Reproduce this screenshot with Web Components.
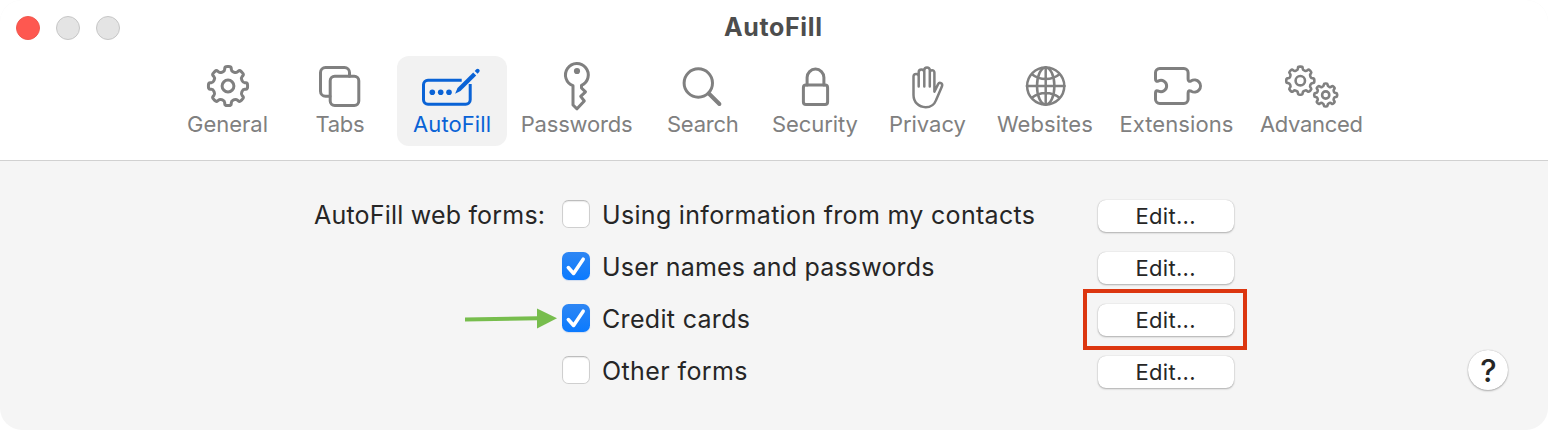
<!DOCTYPE html>
<html lang="en">
<head>
<meta charset="utf-8">
<title>AutoFill</title>
<style>
body {
    margin: 0;
    background: #fff;
    font-family: Inter, "Liberation Sans", sans-serif;
}
</style>
</head>
<body>
<settings-window>
    <window-bar slot="head"><fit-label width="98">AutoFill</fit-label></window-bar>
    <tool-bar slot="head">
        <tool-item icon="general" size="111"><fit-label width="81">General</fit-label></tool-item>
        <tool-item icon="tabs" size="110"><fit-label width="49">Tabs</fit-label></tool-item>
        <tool-item icon="autofill" size="110" active><fit-label width="78">AutoFill</fit-label></tool-item>
        <tool-item icon="passwords" size="135.4"><fit-label width="112">Passwords</fit-label></tool-item>
        <tool-item icon="search" size="113"><fit-label width="72">Search</fit-label></tool-item>
        <tool-item icon="security" size="107"><fit-label width="86">Security</fit-label></tool-item>
        <tool-item icon="privacy" size="114"><fit-label width="77">Privacy</fit-label></tool-item>
        <tool-item icon="websites" size="117"><fit-label width="96">Websites</fit-label></tool-item>
        <tool-item icon="extensions" size="142"><fit-label width="114">Extensions</fit-label></tool-item>
        <tool-item icon="advanced" size="124"><fit-label width="103">Advanced</fit-label></tool-item>
    </tool-bar>
    <form-row>
        <fit-label slot="title" width="231">AutoFill web forms:</fit-label>
        <check-box></check-box>
        <fit-label slot="text" width="433">Using information from my contacts</fit-label>
    </form-row>
    <form-row>
        <check-box checked></check-box>
        <fit-label slot="text" width="332.5">User names and passwords</fit-label>
    </form-row>
    <form-row marked>
        <check-box checked></check-box>
        <fit-label slot="text" width="148">Credit cards</fit-label>
    </form-row>
    <form-row>
        <check-box></check-box>
        <fit-label slot="text" width="145.5">Other forms</fit-label>
    </form-row>
    <help-button slot="help">?</help-button>
</settings-window>

<script>
// closed outline of a gear, corners softened by quadratic curves
function gearPath(cx, cy, outer, root, teeth) {
    const step = Math.PI * 2 / teeth;
    const points = [];
    for (let i = 0; i < teeth; i++) {
        const a = i * step - Math.PI / 2;
        [[-0.29, root], [-0.2, outer], [0.2, outer], [0.29, root]].forEach(([k, r]) => {
            points.push([cx + Math.cos(a + k * step) * r, cy + Math.sin(a + k * step) * r]);
        });
    }
    const along = (p, q, t) => [p[0] + (q[0] - p[0]) * t, p[1] + (q[1] - p[1]) * t].map((n) => n.toFixed(2)).join(" ");
    let d = "";
    points.forEach((p, i) => {
        const prev = points[(i + points.length - 1) % points.length];
        const next = points[(i + 1) % points.length];
        d += `${i ? "L" : "M"}${along(p, prev, 0.38)}Q${p[0].toFixed(2)} ${p[1].toFixed(2)} ${along(p, next, 0.38)}`;
    });
    return d + "Z";
}

const icons = {
    general: `<path d="${gearPath(30, 24, 19.8, 15.3, 8)}"/><circle cx="30" cy="24" r="5.9"/>`,
    tabs: `<rect x="20.2" y="14.2" width="28.6" height="29.3" rx="4.5"/>
        <path d="M20 34.2h-4.5a5 5 0 0 1-5-5V10.5a5 5 0 0 1 5-5h19a5 5 0 0 1 5 5v3.7"/>`,
    autofill: `<path d="M39.7 18.2H6a4.5 4.5 0 0 0-4.5 4.5v15a4.5 4.5 0 0 0 4.5 4.5h37.7a4.5 4.5 0 0 0 4.5-4.5V22" stroke-linecap="butt"/>
        <g fill="currentColor" stroke="none">
            <circle cx="10.3" cy="30.3" r="2.8"/><circle cx="18.7" cy="30.3" r="2.8"/><circle cx="27" cy="30.3" r="2.8"/>
            <path d="M33.1 31.8l2.4-5.9L51.2 10.4l3 3-15.7 15.6z"/>
            <path d="M52.7 8.9l1.6-1.6q1.4-1.2 2.7 0 1.4 1.4.2 2.8l-1.6 1.6z"/>
        </g>`,
    passwords: `<path d="M26 23.7A11.4 11.4 0 1 1 34.5 23.4V26l4 3.8-4.8 4.6 3.6 4.6L30 46.8l-4-3.8z"/>
        <circle cx="30" cy="9" r="3.1" fill="currentColor" stroke="none"/>`,
    search: `<circle cx="25.3" cy="21" r="14.2"/><path d="M35.8 31.5L46.4 42" stroke-width="4"/>`,
    security: `<rect x="18.4" y="23.1" width="24.2" height="19.5" rx="2.6"/>
        <path d="M22.1 23v-7.4a8.4 8.5 0 0 1 16.8 0V23"/>`,
    privacy: `<path stroke-width="2.5" d="M21.7 24.6V14.6a2.6 2.6 0 0 0-5.2 0V33c0 7 5 12.2 12.2 12.2 5.6 0 8.7-2.8 10.4-7.1l5.8-13.5c1.3-3.6-2.5-5-3.9-2.3l-3.6 7.3V10.6a2.3 2.3 0 0 0-4.6 0v14M32.8 24.6V8.2a2.7 2.7 0 0 0-5.5 0v16.4M27.3 24.6V10.3a2.8 2.8 0 0 0-5.6 0v14.3"/>`,
    websites: `<g stroke-width="2.5"><circle cx="30.7" cy="24" r="18.6"/><ellipse cx="30.7" cy="24" rx="8.7" ry="18.6"/>
        <path d="M30.7 5.2v37.6M11.9 24h37.6M16.9 12.2Q23 17 30.7 17t13.8-4.8M16.9 35.8Q23 31 30.7 31t13.8 4.8"/></g>`,
    extensions: `<path d="M9.5 17V10.7a4.2 4.2 0 0 1 4.2-4.2h24.2a4.2 4.2 0 0 1 4.2 4.2V17c0 2.5 1.2 2.8 3.1 1.8a6.1 6.1 0 1 1 0 10.4c-1.9-1-3.1-.7-3.1 1.8v6.3a4.2 4.2 0 0 1-4.2 4.2H13.7a4.2 4.2 0 0 1-4.2-4.2V31c0-2.5 1.2-2.8 3.1-1.8a5.7 5.7 0 1 0 0-10.4c-1.9 1-3.1.7-3.1-1.8z"/>`,
    advanced: `<g stroke-width="2.6"><path d="${gearPath(19.3, 18.7, 14.2, 11.1, 8)}"/><circle cx="19.3" cy="18.7" r="4.7"/>
        <path d="${gearPath(44.7, 33, 11.6, 9, 8)}"/><circle cx="44.7" cy="33" r="3.6"/></g>`
};

class BaseElement extends HTMLElement {
    constructor () {
        super();
        this.attachShadow({mode: "open"});
    }

    connectedCallback () {
        this.shadowRoot.innerHTML = this.template();
    }
}

// one line of text, tracked out or in to a given width
class FitLabel extends BaseElement {
    template () {
        return `<style>
:host {
    display: inline-block;
    width: ${this.getAttribute("width")}px;
    white-space: nowrap;
}
</style><span><slot></slot></span>`;
    }

    connectedCallback () {
        super.connectedCallback();
        requestAnimationFrame(() => this.fit());
    }

    fit () {
        const span = this.shadowRoot.querySelector("span");
        const count = this.textContent.length - 1;
        const spare = Number(this.getAttribute("width")) - span.getBoundingClientRect().width;
        span.style.letterSpacing = `${spare / count}px`;
    }
}

class SettingsWindow extends BaseElement {
    template () {
        return `<style>
:host {
    display: block;
    height: 430px;
    box-sizing: border-box;
    border-radius: 22px;
    overflow: hidden;
    background: #f5f5f5;
    position: relative;
}

header {
    height: 160px;
    background: #fff;
    border-bottom: 1px solid #d1d1d1;
}

main {
    padding-top: 28px;
}

::slotted(help-button) {
    position: absolute;
    right: 40px;
    bottom: 40px;
}
</style>
<header><slot name="head"></slot></header>
<main><slot></slot></main>
<slot name="help"></slot>`;
    }
}

class WindowBar extends BaseElement {
    template () {
        return `<style>
:host {
    display: grid;
    grid-template-columns: 1fr auto 1fr;
    height: 56px;
    align-items: center;
    color: #4d4d4d;
    font-size: 25px;
    font-weight: 700;
}

.lights {
    display: flex;
    gap: 16px;
    padding-left: 16px;
}

::slotted(fit-label) {
    margin: 0 2px 2px 0;
}

i {
    width: 24px;
    height: 24px;
    border-radius: 50%;
    box-sizing: border-box;
    background: #e4e4e4;
    border: 1px solid #c6c6c6;
}

i:first-child {
    background: #fe5850;
    border-color: #f0584e;
}
</style>
<div class="lights"><i></i><i></i><i></i></div>
<slot></slot>`;
    }
}

class ToolBar extends BaseElement {
    template () {
        return `<style>
:host {
    display: flex;
    gap: 2px;
    padding-left: 172px;
}
</style><slot></slot>`;
    }
}

class ToolItem extends BaseElement {
    template () {
        return `<style>
:host {
    display: flex;
    flex-direction: column;
    align-items: center;
    box-sizing: border-box;
    width: ${this.getAttribute("size")}px;
    height: 90px;
    padding-top: 6px;
    border-radius: 12px;
    color: #808080;
    font-size: 22px;
    line-height: 28px;
}

:host([active]) {
    background: #f2f2f2;
    color: #0a63d6;
}

svg {
    display: block;
    width: 60px;
    height: 48px;
    overflow: visible;
    fill: none;
    stroke: currentColor;
    stroke-width: 3;
    stroke-linecap: round;
    stroke-linejoin: round;
}
</style>
<svg viewBox="0 0 60 48">${icons[this.getAttribute("icon")]}</svg>
<slot></slot>`;
    }
}

class FormRow extends BaseElement {
    template () {
        const arrow = `<svg class="arrow" width="94" height="22" viewBox="0 0 94 22">
    <path d="M1 9.4L74 8.2V12.2L1 13.4z" fill="#77bd4d"/><path d="M73 .5l20 9.8L73 20.5z" fill="#77bd4d"/>
</svg>`;
        return `<style>
:host {
    display: grid;
    grid-template-columns: 545px 29px 480px 136px;
    column-gap: 14px;
    align-items: center;
    height: 52px;
    color: #262626;
    font-size: 25px;
    line-height: 32px;
    position: relative;
}

.title {
    text-align: right;
}

.check {
    padding-bottom: 2px;
    margin-left: 3px;
}

button {
    width: 136px;
    height: 32px;
    padding: 0 1px 0 0;
    margin-left: 2px;
    margin-top: 2px;
    border: none;
    border-radius: 8px;
    background: #fff;
    box-shadow: 0 0 1px rgba(0, 0, 0, 0.25), 0 1px 2px rgba(0, 0, 0, 0.28);
    color: #262626;
    font: 22px/32px Inter, "Liberation Sans", sans-serif;
}

.mark {
    position: absolute;
    left: 1083px;
    top: -4px;
    width: 164px;
    height: 61px;
    box-sizing: border-box;
    border: 4px solid #dc3610;
}

.arrow {
    position: absolute;
    left: 464px;
    top: 15px;
}
</style>
<div class="title"><slot name="title"></slot></div>
<div class="check"><slot></slot></div>
<slot name="text"></slot>
<button><fit-label width="60">Edit...</fit-label></button>
${this.hasAttribute("marked") ? arrow + `<div class="mark"></div>` : ""}`;
    }
}

class CheckBox extends BaseElement {
    template () {
        return `<style>
:host {
    display: block;
    width: 28px;
    height: 28px;
    box-sizing: border-box;
    border-radius: 6.5px;
    background: #fff;
    border: 1px solid #cfcfcf;
    border-top-color: #bdbdbd;
    box-shadow: inset 0 1px 1px rgba(0, 0, 0, 0.08);
}

:host([checked]) {
    border: none;
    background: linear-gradient(#2e86f3, #0a7aff);
    box-shadow: 0 1px 1px rgba(0, 80, 200, 0.15);
}

svg {
    display: block;
}
</style>
${this.hasAttribute("checked") ? `<svg width="28" height="28" viewBox="0 0 28 28">
    <path d="M6.3 15.5l5.3 6L21.2 7.2" fill="none" stroke="#fff" stroke-width="3.5" stroke-linecap="round" stroke-linejoin="round"/>
</svg>` : ""}`;
    }
}

class HelpButton extends BaseElement {
    template () {
        return `<style>
:host {
    display: block;
    width: 40px;
    height: 40px;
    box-sizing: border-box;
    padding-left: 1px;
    border-radius: 50%;
    background: #fff;
    box-shadow: 0 0 1px rgba(0, 0, 0, 0.3), 0 1px 2px rgba(0, 0, 0, 0.28);
    color: #262626;
    font-size: 31px;
    font-weight: 500;
    line-height: 41px;
    text-align: center;
}
</style><slot></slot>`;
    }
}

customElements.define("fit-label", FitLabel);
customElements.define("settings-window", SettingsWindow);
customElements.define("window-bar", WindowBar);
customElements.define("tool-bar", ToolBar);
customElements.define("tool-item", ToolItem);
customElements.define("check-box", CheckBox);
customElements.define("form-row", FormRow);
customElements.define("help-button", HelpButton);
</script>
</body>
</html>
